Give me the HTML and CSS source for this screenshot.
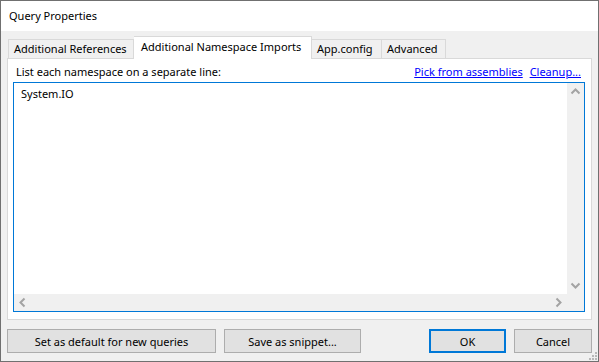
FILE: index.html
```html
<html lang="en">
<head>
    <meta charset="UTF-8">
    <title>Query Properties</title>
    <link rel="stylesheet" href="styles.css">
</head>
<body>
    <div class="dialog">
        <div class="titlebar">Query Properties</div>

        <div class="content">
            <div class="tabs">
                <div class="tab tab-refs">Additional References</div>
                <div class="tab tab-active">Additional Namespace Imports</div>
                <div class="tab tab-config">App.config</div>
                <div class="tab tab-adv">Advanced</div>
            </div>

            <div class="panel">
                <div class="panel-head">
                    <span>List each namespace on a separate line:</span>
                    <span class="links">
                        <a href="#">Pick from assemblies</a>
                        <a href="#">Cleanup...</a>
                    </span>
                </div>

                <div class="editor">
                    <div class="editor-main">
                        <div class="editor-text">System.IO</div>
                        <div class="vscroll">
                            <svg width="17" height="17" viewBox="0 0 17 17"><path d="M4.5 10.5 L8.5 6.5 L12.5 10.5" class="chev"/></svg>
                            <svg width="17" height="17" viewBox="0 0 17 17"><path d="M4.5 6.5 L8.5 10.5 L12.5 6.5" class="chev"/></svg>
                        </div>
                    </div>
                    <div class="hscroll">
                        <svg width="17" height="17" viewBox="0 0 17 17"><path d="M10.5 4.5 L6.5 8.5 L10.5 12.5" class="chev"/></svg>
                        <svg width="17" height="17" viewBox="0 0 17 17"><path d="M6.5 4.5 L10.5 8.5 L6.5 12.5" class="chev"/></svg>
                        <div class="corner"></div>
                    </div>
                </div>
            </div>

            <div class="buttons">
                <button class="btn btn-default">Set as default for new queries</button>
                <button class="btn btn-snippet">Save as snippet...</button>
                <div class="spacer"></div>
                <button class="btn btn-ok">OK</button>
                <button class="btn btn-cancel">Cancel</button>
            </div>
        </div>

        <svg class="grip" width="8" height="8" viewBox="0 0 8 8">
            <rect x="6" y="0" width="2" height="2"/>
            <rect x="3" y="3" width="2" height="2"/><rect x="6" y="3" width="2" height="2"/>
            <rect x="0" y="6" width="2" height="2"/><rect x="3" y="6" width="2" height="2"/><rect x="6" y="6" width="2" height="2"/>
        </svg>
    </div>
</body>
</html>
```

FILE: styles.css
```css
* {
    box-sizing: border-box;
}

body {
    margin: 0;
    font-family: 'Segoe UI', 'Noto Sans', sans-serif;
    font-size: 11px;
    color: #000;
    background-color: #f0f0f0;
}

.dialog {
    position: relative;
    width: 599px;
    height: 362px;
    border: 1px solid #707070;
    background-color: #f0f0f0;
    display: flex;
    flex-direction: column;
}

.titlebar {
    height: 30px;
    line-height: 30px;
    padding-left: 8px;
    background-color: #fff;
}

.content {
    flex: 1;
    padding: 5px 6px 0 6px;
    display: flex;
    flex-direction: column;
}

/* tabs */
.tabs {
    display: flex;
    align-items: flex-end;
    height: 22px;
    padding-left: 1px;
}

.tab {
    height: 19px;
    line-height: 18px;
    padding: 0 5px;
    border: 1px solid #d9d9d9;
    border-bottom: none;
    background-color: #f0f0f0;
    white-space: nowrap;
}

.tab-refs {
    width: 126px;
}

.tab-config {
    width: 70px;
    border-left: none;
}

.tab-adv {
    width: 64px;
    border-left: none;
}

.tab-active {
    position: relative;
    z-index: 1;
    width: 178px;
    height: 23px;
    line-height: 19px;
    margin-bottom: -1px;
    padding: 0 7px;
    border-left: none;
    background-color: #fff;
}

/* panel */
.panel {
    height: 262px;
    border: 1px solid #d9d9d9;
    background-color: #fff;
    padding: 0 6px 7px 5px;
    display: flex;
    flex-direction: column;
}

.panel-head {
    height: 23px;
    display: flex;
    align-items: center;
    justify-content: space-between;
    padding: 1px 4px 0 3px;
}

.links a {
    color: #0000ff;
    text-decoration: underline;
    margin-left: 4px;
}

.editor {
    flex: 1;
    border: 1px solid #0078d7;
    display: flex;
    flex-direction: column;
}

.editor-main {
    flex: 1;
    display: flex;
}

.editor-text {
    flex: 1;
    padding: 3px 7px;
    line-height: 16px;
}

.vscroll {
    width: 17px;
    background-color: #f0f0f0;
    display: flex;
    flex-direction: column;
    justify-content: space-between;
}

.hscroll {
    height: 17px;
    background-color: #f0f0f0;
    display: flex;
    justify-content: space-between;
}

.hscroll .corner {
    width: 17px;
}

.chev {
    fill: none;
    stroke: #a3a3a3;
    stroke-width: 2;
}

.vscroll svg,
.hscroll svg {
    display: block;
}

.hscroll svg:nth-of-type(2) {
    margin-left: auto;
}

/* buttons */
.buttons {
    display: flex;
    margin-top: 9px;
}

.btn {
    height: 24px;
    padding: 0;
    font-family: inherit;
    font-size: 11px;
    color: #000;
    background-color: #e1e1e1;
    border: 1px solid #adadad;
}

.btn-default {
    width: 209px;
}

.btn-snippet {
    width: 137px;
    margin-left: 8px;
}

.spacer {
    flex: 1;
}

.btn-ok {
    width: 77px;
    border: 2px solid #0078d7;
}

.btn-cancel {
    width: 78px;
    margin-left: 8px;
}

.grip {
    position: absolute;
    right: 1px;
    bottom: 1px;
    fill: #b8b8b8;
}
```
